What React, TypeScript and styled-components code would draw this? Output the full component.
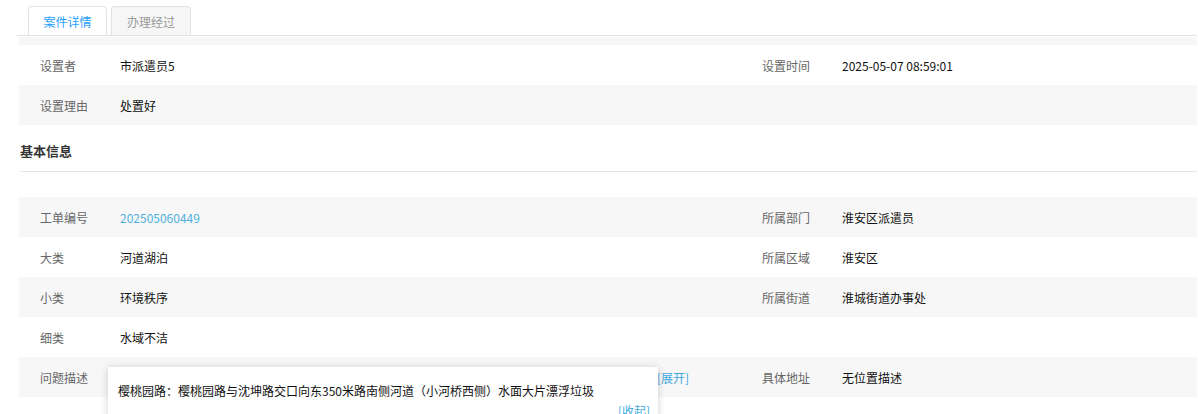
import React from 'react';
import styled, { createGlobalStyle } from 'styled-components';

const GlobalStyle = createGlobalStyle`
  body {
    margin: 0;
    background: #fff;
    font-family: "Noto Sans CJK SC", "Noto Sans", "Liberation Sans", sans-serif;
    font-size: 12px;
    color: #333;
  }
`;

const Page = styled.div`
  min-height: 414px;
  padding: 0 1px 0 17px;
  overflow: hidden;
`;

const TabBar = styled.div`
  display: flex;
  gap: 4px;
  height: 36px;
  box-sizing: border-box;
  padding: 6px 0 0 11px;
  border-bottom: 1px solid #e2e2e2;
`;

const Tab = styled.div<{ $active?: boolean }>`
  box-sizing: border-box;
  height: 29px;
  width: ${(p) => (p.$active ? 79 : 80)}px;
  display: flex;
  align-items: center;
  justify-content: center;
  border: 1px solid #e2e2e2;
  border-bottom: none;
  border-radius: 4px 4px 0 0;
  background: ${(p) => (p.$active ? '#fff' : '#f6f6f6')};
  color: ${(p) => (p.$active ? '#1e9fff' : '#999')};
  font-size: 12px;
`;

const Body = styled.div`
  padding-left: 2px;
`;

const TopStrip = styled.div`
  margin-top: 1px;
  height: 8px;
  background: #f7f7f7;
`;

const Row = styled.div<{ $shade?: boolean }>`
  display: grid;
  grid-template-columns: 101px 621px 101px 1fr;
  height: 40px;
  background: ${(p) => (p.$shade ? '#f7f7f7' : '#fff')};
`;

const Label = styled.div`
  display: flex;
  align-items: center;
  padding-left: 21px;
  color: #666;
  white-space: nowrap;
`;

const Value = styled.div<{ $link?: boolean }>`
  position: relative;
  display: flex;
  align-items: center;
  color: ${(p) => (p.$link ? '#4fb0de' : '#111')};
  white-space: nowrap;
`;

const Heading = styled.div`
  margin-left: 1px;
  padding: 18px 0 12px;
  line-height: 16px;
  font-size: 13px;
  font-weight: bold;
  color: #333;
  border-bottom: 1px solid #e6e6e6;
  margin-bottom: 25px;
`;

const Clipped = styled.span<{ $covered?: boolean }>`
  width: 537px;
  overflow: hidden;
  text-overflow: ellipsis;
  visibility: ${(p) => (p.$covered ? 'hidden' : 'visible')};
`;

const Toggle = styled.span<{ $block?: boolean }>`
  color: #3fa9dc;
  cursor: pointer;
  ${(p) => (p.$block ? 'display: block; text-align: right; line-height: 20px;' : '')}
`;

const Popover = styled.div`
  position: absolute;
  top: 10px;
  left: -12px;
  width: 550px;
  box-sizing: border-box;
  padding: 14px 8px 6px 10px;
  background: #fff;
  box-shadow: 0 1px 8px rgba(0, 0, 0, 0.18);
  z-index: 2;
  white-space: normal;
  color: #111;
  line-height: 20px;
`;

const description = '樱桃园路：樱桃园路与沈坤路交口向东350米路南侧河道（小河桥西侧）水面大片漂浮垃圾';

export default function App() {
  const expanded = true;

  return (
    <>
      <GlobalStyle />
      <Page>
        <TabBar>
          <Tab $active>案件详情</Tab>
          <Tab>办理经过</Tab>
        </TabBar>
        <Body>
          <TopStrip />
          <Row>
            <Label>设置者</Label>
            <Value>市派遣员5</Value>
            <Label>设置时间</Label>
            <Value>2025-05-07 08:59:01</Value>
          </Row>
          <Row $shade>
            <Label>设置理由</Label>
            <Value>处置好</Value>
            <Label />
            <Value />
          </Row>
          <Heading>基本信息</Heading>
          <Row $shade>
            <Label>工单编号</Label>
            <Value $link>202505060449</Value>
            <Label>所属部门</Label>
            <Value>淮安区派遣员</Value>
          </Row>
          <Row>
            <Label>大类</Label>
            <Value>河道湖泊</Value>
            <Label>所属区域</Label>
            <Value>淮安区</Value>
          </Row>
          <Row $shade>
            <Label>小类</Label>
            <Value>环境秩序</Value>
            <Label>所属街道</Label>
            <Value>淮城街道办事处</Value>
          </Row>
          <Row>
            <Label>细类</Label>
            <Value>水域不洁</Value>
            <Label />
            <Value />
          </Row>
          <Row $shade>
            <Label>问题描述</Label>
            <Value>
              <Clipped $covered={expanded}>{description}</Clipped>
              <Toggle>[展开]</Toggle>
              {expanded && (
                <Popover>
                  {description}
                  <Toggle $block>[收起]</Toggle>
                </Popover>
              )}
            </Value>
            <Label>具体地址</Label>
            <Value>无位置描述</Value>
          </Row>
        </Body>
      </Page>
    </>
  );
}
